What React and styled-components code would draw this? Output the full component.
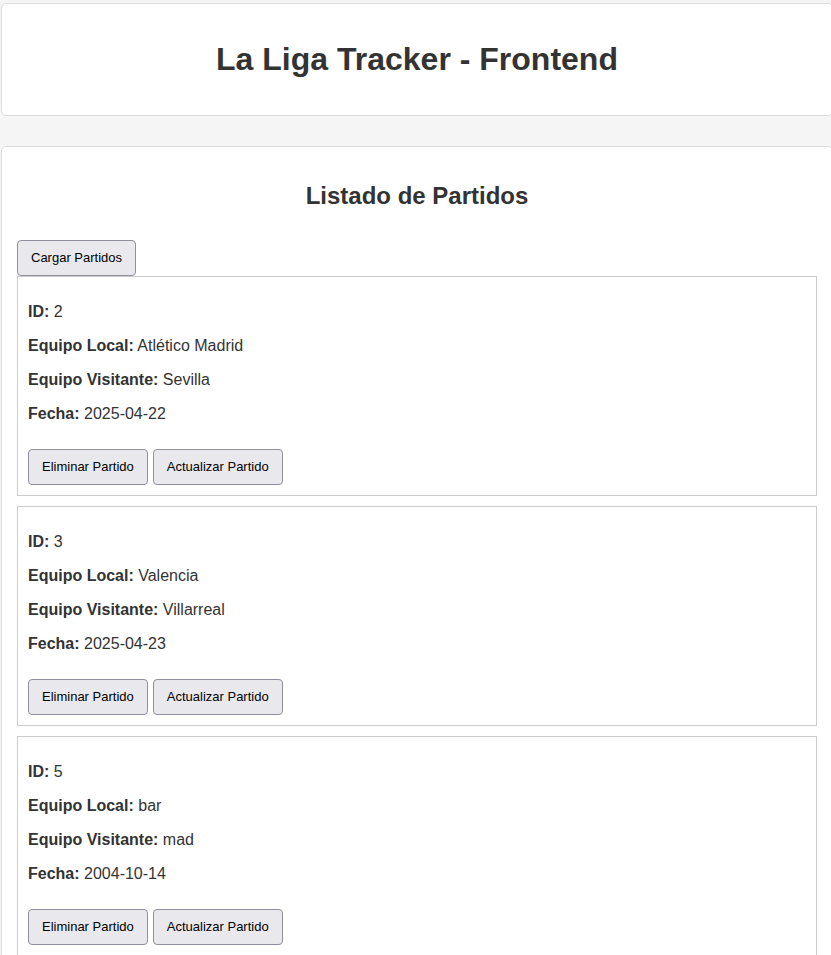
import React, { useState } from "react";
import styled, { createGlobalStyle } from "styled-components";

const GlobalStyle = createGlobalStyle`
  html, body {
    margin: 0;
    padding: 0;
    background: #f5f5f5;
    overflow-x: hidden;
  }
  body {
    font-family: "Liberation Sans", Arial, sans-serif;
    color: #333;
  }
`;

const Page = styled.div`
  padding: 3px 0 0 1px;
  width: 832px;
`;

const Panel = styled.section`
  background: #fff;
  border: 1px solid #ddd;
  border-radius: 5px;
  padding: 15px;
  margin-bottom: ${(p) => p.$gap || 0}px;
`;

const Title = styled.h1`
  font-size: 32px;
  font-weight: bold;
  text-align: center;
  margin: 22.4px 0 22px;
`;

const SubTitle = styled.h2`
  font-size: 24px;
  font-weight: bold;
  text-align: center;
  margin: 19.92px 0 0;
`;

const Toolbar = styled.div`
  display: flex;
  padding-top: 30px;
`;

const Button = styled.button`
  font-family: "Liberation Sans", Arial, sans-serif;
  font-size: 13px;
  line-height: 14px;
  color: #000;
  background: #e9e9ed;
  border: 1px solid #8f8f9d;
  border-radius: 4px;
  padding: 10px 13px;
  cursor: pointer;
`;

const MatchList = styled.div`
  display: flex;
  flex-direction: column;
  gap: 10px;
`;

const MatchCard = styled.div`
  border: 1px solid #ccc;
  padding: 10px;
  background: #fff;
`;

const Field = styled.p`
  font-size: 16px;
  margin: 16px 0;
`;

const Actions = styled.div`
  display: flex;
  gap: 5px;
  padding-top: 10px;
`;

const initial = [
  { id: 2, local: "Atlético Madrid", visitante: "Sevilla", fecha: "2025-04-22" },
  { id: 3, local: "Valencia", visitante: "Villarreal", fecha: "2025-04-23" },
  { id: 5, local: "bar", visitante: "mad", fecha: "2004-10-14" },
];

export default function App() {
  const [partidos, setPartidos] = useState(initial);

  return (
    <Page>
      <GlobalStyle />
      <Panel $gap={30}>
        <Title>La Liga Tracker - Frontend</Title>
      </Panel>
      <Panel>
        <SubTitle>Listado de Partidos</SubTitle>
        <Toolbar>
          <Button onClick={() => setPartidos(initial)}>Cargar Partidos</Button>
        </Toolbar>
        <MatchList>
          {partidos.map((p) => (
            <MatchCard key={p.id}>
              <Field><strong>ID:</strong> {p.id}</Field>
              <Field><strong>Equipo Local:</strong> {p.local}</Field>
              <Field><strong>Equipo Visitante:</strong> {p.visitante}</Field>
              <Field><strong>Fecha:</strong> {p.fecha}</Field>
              <Actions>
                <Button onClick={() => setPartidos(partidos.filter((x) => x.id !== p.id))}>
                  Eliminar Partido
                </Button>
                <Button>Actualizar Partido</Button>
              </Actions>
            </MatchCard>
          ))}
        </MatchList>
      </Panel>
    </Page>
  );
}
